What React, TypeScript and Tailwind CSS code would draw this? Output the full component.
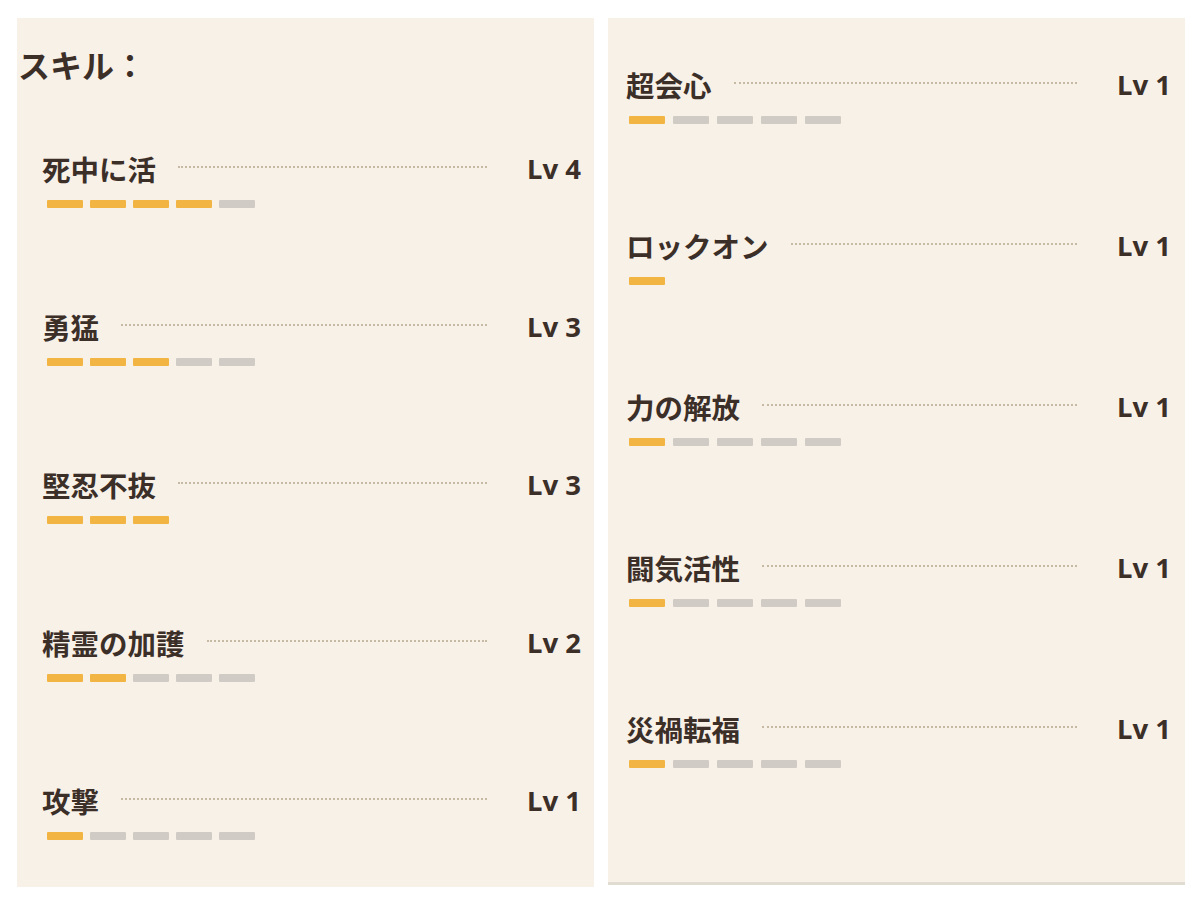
import React from "react";

type Skill = { name: string; lv: number; total: number };

const left: Skill[] = [
  { name: "死中に活", lv: 4, total: 5 },
  { name: "勇猛", lv: 3, total: 5 },
  { name: "堅忍不抜", lv: 3, total: 3 },
  { name: "精霊の加護", lv: 2, total: 5 },
  { name: "攻撃", lv: 1, total: 5 },
];

const right: Skill[] = [
  { name: "超会心", lv: 1, total: 5 },
  { name: "ロックオン", lv: 1, total: 1 },
  { name: "力の解放", lv: 1, total: 5 },
  { name: "闘気活性", lv: 1, total: 5 },
  { name: "災禍転福", lv: 1, total: 5 },
];

const font = { fontFamily: '"Noto Sans CJK JP", "Noto Sans", sans-serif' };
const latin = { fontFamily: '"Noto Sans", "Noto Sans CJK JP", sans-serif' };

function Row({ s, barOffset, gap }: { s: Skill; barOffset: string; gap: string }) {
  return (
    <div className="flex flex-col">
      <div className="flex h-[34px] items-center">
        <span className="mt-[-3px] text-[28.5px] font-bold leading-[34px] text-[#3b2f28]">{s.name}</span>
        <div className="ml-[22px] mr-[40px] mt-[-6px] flex-1 border-t-2 border-dotted border-[#c7baa5]" />
        <span className="mt-[-3px] text-[27.5px] font-bold leading-[34px] text-[#3b2f28]" style={latin}>
          Lv {s.lv}
        </span>
      </div>
      <div className={`mt-[13px] flex h-[8px] ${gap} ${barOffset}`}>
        {Array.from({ length: s.total }).map((_, i) => (
          <div
            key={i}
            className={`h-[8px] w-[36px] rounded-[1px] ${i < s.lv ? "bg-[#f2b442]" : "bg-[#d0ccc5]"}`}
          />
        ))}
      </div>
    </div>
  );
}

export default function App() {
  return (
    <div className="flex h-[901px] w-[1200px] gap-[14px] bg-white pl-[17px] pt-[18px]" style={font}>
      <div className="h-[869px] w-[577px] bg-[#f8f1e8] pt-[26px]">
        <div className="h-[40px] pl-[1px] text-[32px] font-bold leading-[40px] text-[#3b2f28]">スキル：</div>
        <div className="mt-[69px] flex flex-col gap-[103px] pl-[25px] pr-[13px]">
          {left.map((s) => (
            <Row key={s.name} s={s} barOffset="ml-[5px]" gap="gap-[7px]" />
          ))}
        </div>
      </div>
      <div className="box-border h-[867px] w-[577px] border-b-[3px] border-[#e0dcd2] bg-[#f8f1e8] pt-[51px]">
        <div className="flex flex-col gap-[106px] pl-[18px] pr-[14px]">
          {right.map((s) => (
            <Row key={s.name} s={s} barOffset="ml-[3px]" gap="gap-[8px]" />
          ))}
        </div>
      </div>
    </div>
  );
}
